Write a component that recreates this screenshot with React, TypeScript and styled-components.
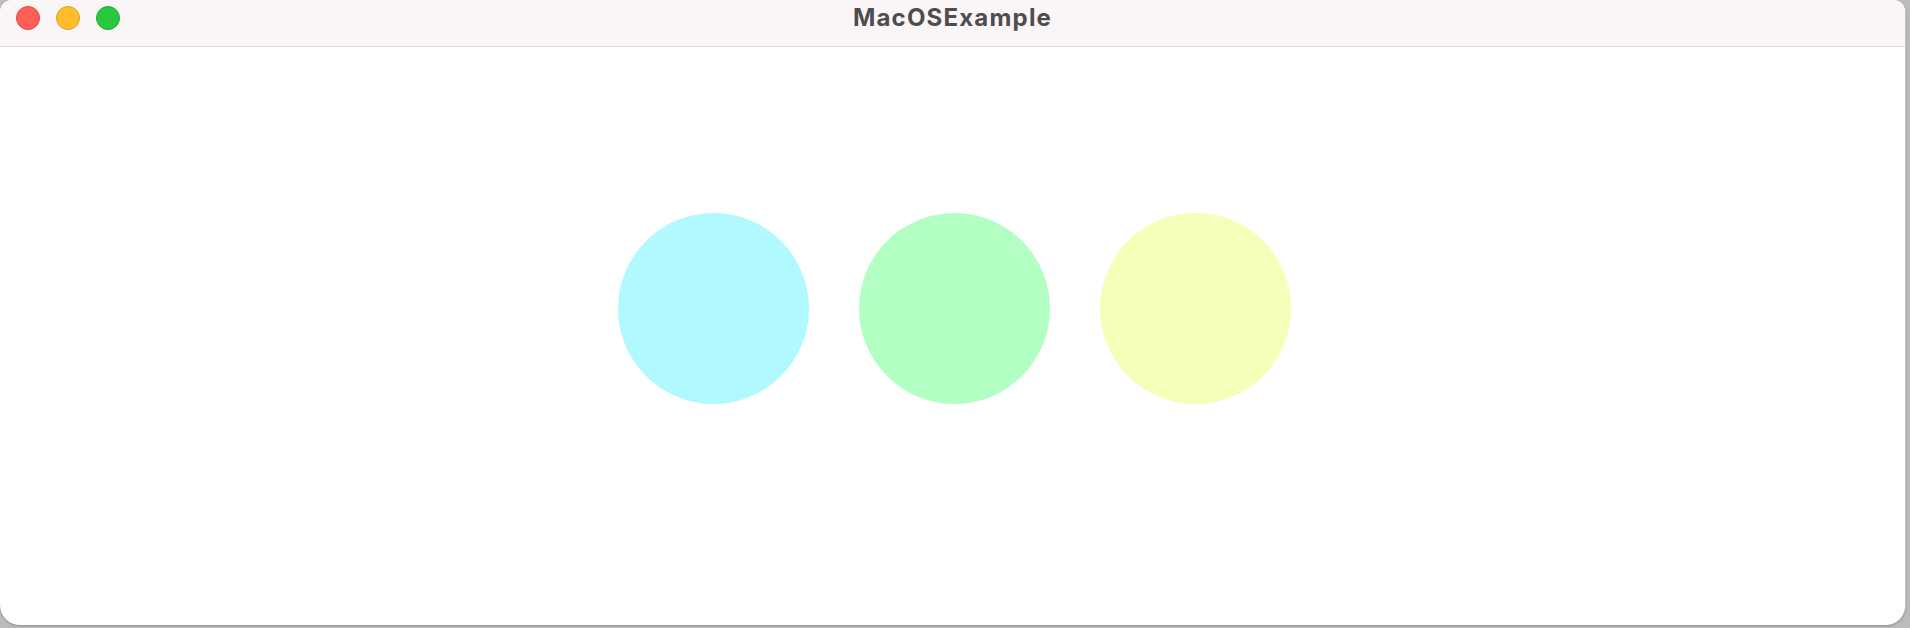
import React from "react";
import styled, { createGlobalStyle } from "styled-components";

const GlobalStyle = createGlobalStyle`
* {
  box-sizing: border-box;
}
body {
  margin: 0;
  padding: 0;
  background: #bdbabb;
  font-family: "Inter", "Liberation Sans", Arial, sans-serif;
  overflow: hidden;
}
`;

const Desktop = styled.div`
  width: 1910px;
  height: 628px;
  background: #bdbabb;
`;

const Window = styled.div`
  width: 1906px;
  height: 625px;
  background: #fff;
  border-radius: 12px 12px 20px 20px;
  border-right: 1px solid #c9c6c7;
  box-shadow: 0 1px 2px rgba(0, 0, 0, 0.25);
  overflow: hidden;
  display: flex;
  flex-direction: column;
`;

const TitleBar = styled.div`
  position: relative;
  height: 47px;
  flex-shrink: 0;
  background: #faf6f7;
  border-bottom: 1px solid #d9d6d7;
  display: flex;
  align-items: center;
  justify-content: center;
`;

const Lights = styled.div`
  position: absolute;
  left: 16px;
  top: 6px;
  display: flex;
  gap: 16px;
`;

interface ILight {
  fill: string;
  edge: string;
}

const Light = styled.span<ILight>`
  width: 24px;
  height: 24px;
  border-radius: 50%;
  background: ${({ fill }) => fill};
  border: 1px solid ${({ edge }) => edge};
`;

const Title = styled.div`
  margin-top: -11px;
  font-size: 24px;
  font-weight: 700;
  letter-spacing: 1.2px;
  color: #4f4c4d;
`;

const Content = styled.div`
  flex: 1;
  display: flex;
  justify-content: center;
  align-items: flex-start;
  padding-top: 166px;
  padding-left: 4px;
  gap: 50px;
`;

const Circle = styled.div<{ color: string }>`
  width: 191px;
  height: 191px;
  border-radius: 50%;
  background: ${({ color }) => color};
`;

const circles = ["#b2f9ff", "#b3ffc3", "#f4ffb8"];

export default function App() {
  return (
    <>
      <GlobalStyle />
      <Desktop>
        <Window>
          <TitleBar>
            <Lights>
              <Light fill="#ff5f57" edge="#e2463f" />
              <Light fill="#febc2e" edge="#dfa123" />
              <Light fill="#28c840" edge="#1dad2b" />
            </Lights>
            <Title>MacOSExample</Title>
          </TitleBar>
          <Content>
            {circles.map((c) => (
              <Circle key={c} color={c} />
            ))}
          </Content>
        </Window>
      </Desktop>
    </>
  );
}
